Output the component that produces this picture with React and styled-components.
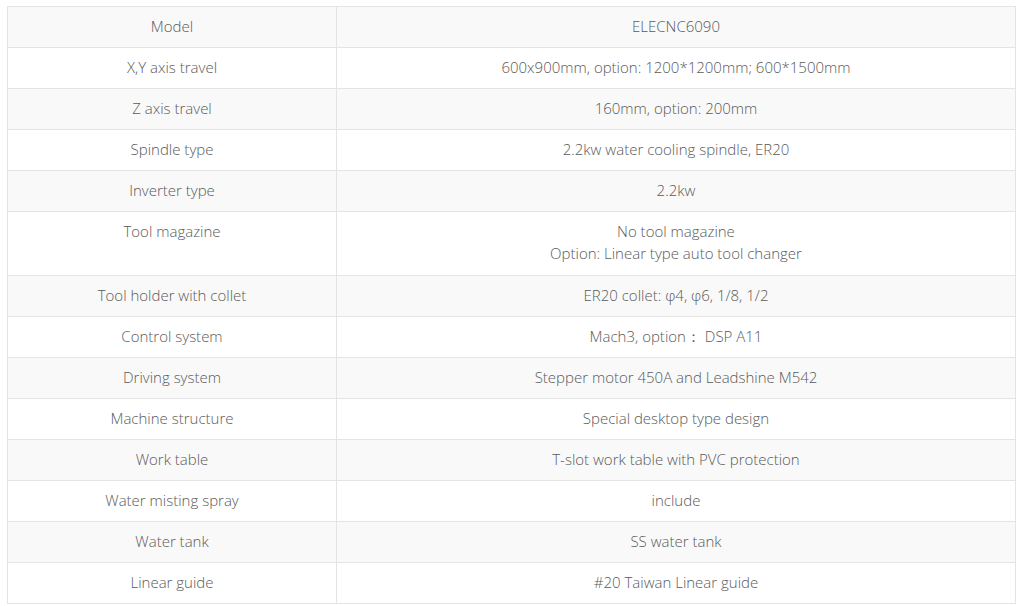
import React from "react";
import styled, { createGlobalStyle } from "styled-components";

const Global = createGlobalStyle`
  html, body { margin: 0; padding: 0; background: #ffffff; }
  body { font-family: "Open Sans", "Liberation Sans", sans-serif; }
`;

const Page = styled.div`
  padding: 6px 8px 0 7px;
`;

const Table = styled.table`
  width: 1009px;
  border-collapse: collapse;
  table-layout: fixed;
  border: 1px solid #e4e4e4;
`;

const Row = styled.tr`
  background: ${(p) => (p.$shaded ? "#f9f9f9" : "#ffffff")};
`;

const Cell = styled.td`
  border: 1px solid #e4e4e4;
  padding: 8px 10px ${(p) => (p.$tall ? "11px" : "10px")};
  text-align: center;
  vertical-align: top;
  font-size: 15px;
  font-weight: 300;
  line-height: 22px;
  color: #5a5a5a;
`;

const rows = [
  ["Model", "ELECNC6090"],
  ["X,Y axis travel", "600x900mm, option: 1200*1200mm; 600*1500mm"],
  ["Z axis travel", "160mm, option: 200mm"],
  ["Spindle type", "2.2kw water cooling spindle, ER20"],
  ["Inverter type", "2.2kw"],
  ["Tool magazine", ["No tool magazine", "Option: Linear type auto tool changer"]],
  ["Tool holder with collet", "ER20 collet: φ4, φ6, 1/8, 1/2"],
  ["Control system", "Mach3, option\uFF1A DSP A11"],
  ["Driving system", "Stepper motor 450A and Leadshine M542"],
  ["Machine structure", "Special desktop type design"],
  ["Work table", "T-slot work table with PVC protection"],
  ["Water misting spray", "include"],
  ["Water tank", "SS water tank"],
  ["Linear guide", "#20 Taiwan Linear guide"],
];

export default function App() {
  return (
    <>
      <Global />
      <Page>
        <Table>
          <colgroup>
            <col style={{ width: "329px" }} />
            <col />
          </colgroup>
          <tbody>
            {rows.map(([k, v], i) => {
              const tall = Array.isArray(v);
              return (
                <Row key={k} $shaded={i % 2 === 0}>
                  <Cell $tall={tall}>{k}</Cell>
                  <Cell $tall={tall}>
                    {tall
                      ? v.map((line, j) => (
                          <React.Fragment key={j}>
                            {j > 0 && <br />}
                            {line}
                          </React.Fragment>
                        ))
                      : v}
                  </Cell>
                </Row>
              );
            })}
          </tbody>
        </Table>
      </Page>
    </>
  );
}
